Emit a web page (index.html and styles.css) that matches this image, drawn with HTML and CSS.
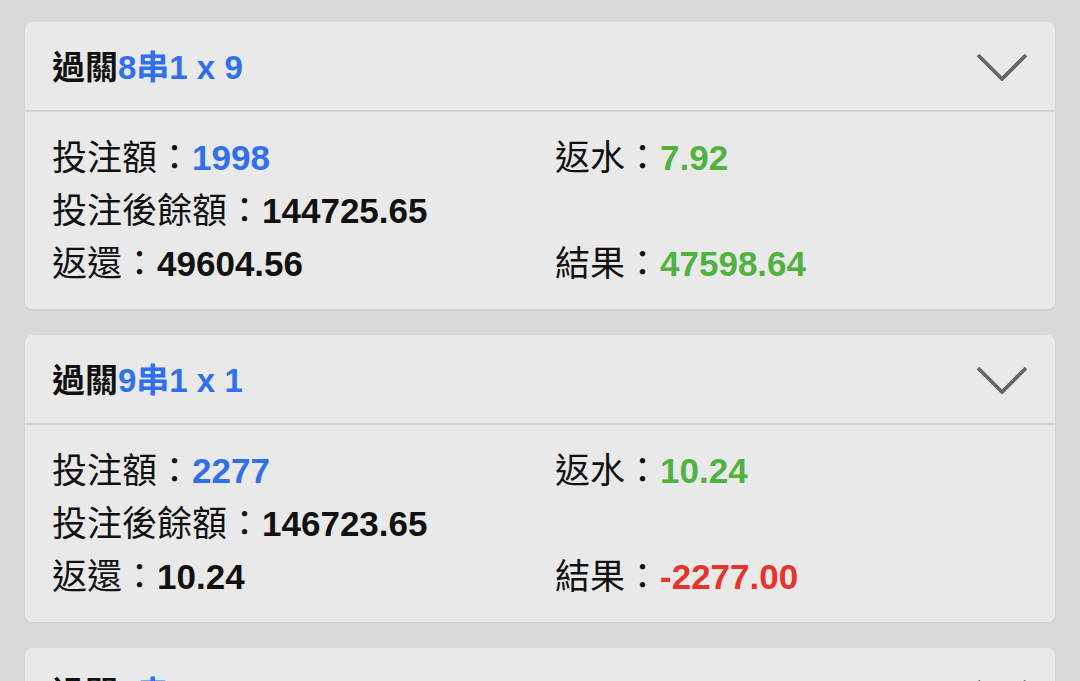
FILE: index.html
```html
<!DOCTYPE html>
<html lang="zh-Hant">
<head>
  <meta charset="UTF-8" />
  <meta name="viewport" content="width=device-width, initial-scale=1.0"/>
  <title>過關注單</title>
  <link rel="stylesheet" href="styles.css">
</head>
<body>
  <div class="list">
    <div class="card">
      <div class="card-head">
        <span class="title">過關<span class="blue">8串1 x 9</span></span>
        <svg class="chevron" viewBox="0 0 52 28"><polyline points="2,2 26,26 50,2"/></svg>
      </div>
      <div class="card-body">
        <div class="item"><span class="label">投注額：</span><b class="blue">1998</b></div>
        <div class="item"><span class="label">返水：</span><b class="green">7.92</b></div>
        <div class="item"><span class="label">投注後餘額：</span><b>144725.65</b></div>
        <div class="item"></div>
        <div class="item"><span class="label">返還：</span><b>49604.56</b></div>
        <div class="item"><span class="label">結果：</span><b class="green">47598.64</b></div>
      </div>
    </div>

    <div class="card">
      <div class="card-head">
        <span class="title">過關<span class="blue">9串1 x 1</span></span>
        <svg class="chevron" viewBox="0 0 52 28"><polyline points="2,2 26,26 50,2"/></svg>
      </div>
      <div class="card-body">
        <div class="item"><span class="label">投注額：</span><b class="blue">2277</b></div>
        <div class="item"><span class="label">返水：</span><b class="green">10.24</b></div>
        <div class="item"><span class="label">投注後餘額：</span><b>146723.65</b></div>
        <div class="item"></div>
        <div class="item"><span class="label">返還：</span><b>10.24</b></div>
        <div class="item"><span class="label">結果：</span><b class="red">-2277.00</b></div>
      </div>
    </div>

    <div class="card">
      <div class="card-head">
        <span class="title">過關<span class="blue">7串1 x 1</span></span>
        <svg class="chevron" viewBox="0 0 52 28"><polyline points="2,2 26,26 50,2"/></svg>
      </div>
      <div class="card-body">
        <div class="item"><span class="label">投注額：</span><b class="blue">1500</b></div>
        <div class="item"><span class="label">返水：</span><b class="green">6.75</b></div>
      </div>
    </div>
  </div>
</body>
</html>
```

FILE: styles.css
```css
:root {
  --bg: #d9d9d9;
  --card: #e9e9e9;
  --line: #d2d2d2;
  --text: #111;
  --blue: #2f6ff0;
  --green: #50b23f;
  --red: #e8322a;
  --font: "Liberation Sans", "Noto Sans CJK TC", sans-serif;
}

* {
  box-sizing: border-box;
}

body {
  margin: 0;
  background: var(--bg);
  font-family: var(--font);
  color: var(--text);
  overflow: hidden;
}

.list {
  display: flex;
  flex-direction: column;
  gap: 26px;
  padding: 22px 25px;
}

.card {
  background: var(--card);
  border-radius: 7px;
  box-shadow: 0 1px 3px rgba(0, 0, 0, 0.06);
}

.card-head {
  height: 90px;
  display: flex;
  align-items: center;
  justify-content: space-between;
  padding: 0 27px;
  border-bottom: 2px solid var(--line);
}

.title {
  font-size: 33px;
  font-weight: bold;
  margin-top: -2px;
}

.chevron {
  width: 52px;
  height: 28px;
  margin-top: 2px;
}

.chevron polyline {
  fill: none;
  stroke: #666;
  stroke-width: 3.8;
}

.card-body {
  display: grid;
  grid-template-columns: 503px 1fr;
  padding: 19px 27px 19px 27px;
  font-size: 35px;
  line-height: 53px;
}

.item {
  min-height: 53px;
  white-space: nowrap;
}

.label {
  font-weight: normal;
}

.item b {
  font-weight: bold;
}

.blue {
  color: var(--blue);
}

.green {
  color: var(--green);
}

.red {
  color: var(--red);
}
```
